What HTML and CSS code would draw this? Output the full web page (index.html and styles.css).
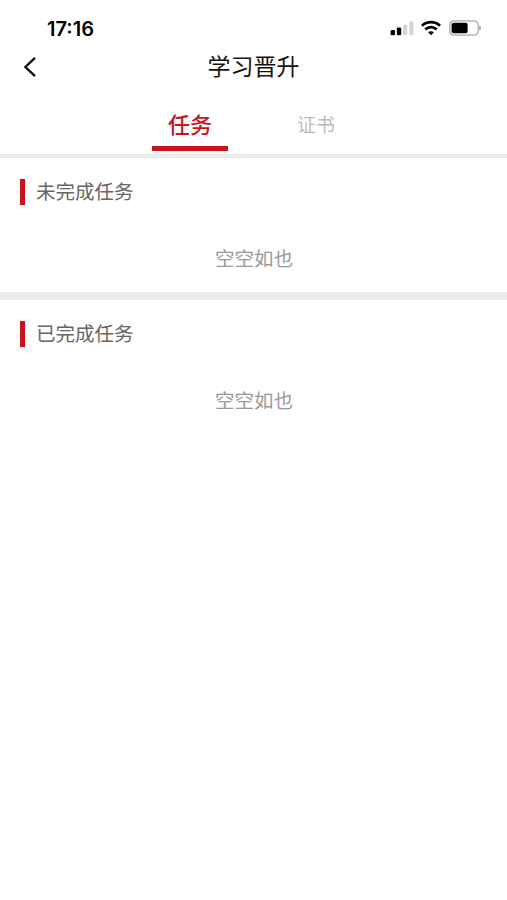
FILE: index.html
```html
<!DOCTYPE html>
<html lang="zh-CN">
<head>
    <meta charset="UTF-8">
    <meta name="viewport" content="width=device-width, initial-scale=1.0">
    <title>学习晋升</title>
    <link rel="stylesheet" href="styles.css">
</head>
<body>

<div class="statusBar">
    <span class="time">17:16</span>
    <div class="statusIcons">
        <svg class="signal" width="24" height="16" viewBox="0 0 24 16">
            <rect x="0.6" y="10" width="4.4" height="5.2" rx="1.2" fill="#000"/>
            <rect x="6.8" y="7.6" width="4.4" height="7.6" rx="1.2" fill="#000"/>
            <rect x="13.2" y="4.6" width="4" height="10.6" rx="1.2" fill="#d4d4d4"/>
            <rect x="19.4" y="1.4" width="4" height="13.8" rx="1.2" fill="#d4d4d4"/>
        </svg>
        <svg class="wifi" width="20" height="16" viewBox="0 0 20 16" fill="none" stroke="#000" stroke-width="2.8">
            <path d="M1 5.8 C6 0.9 14 0.9 19 5.8"/>
            <path d="M4.3 9.4 C7.6 6.4 12.4 6.4 15.7 9.4"/>
            <path d="M10 15.2 L7.1 12.3 C8.7 10.8 11.3 10.8 12.9 12.3 Z" fill="#000" stroke="none"/>
        </svg>
        <svg class="battery" width="33" height="16" viewBox="0 0 33 16">
            <rect x="0.8" y="0.8" width="28.4" height="14.4" rx="4.2" fill="none" stroke="#a9a9a9" stroke-width="1.3"/>
            <rect x="2.6" y="2.8" width="16" height="10.4" rx="2" fill="#000"/>
            <path d="M30.2 5.4 C32.6 6.2 32.6 9.8 30.2 10.6 Z" fill="#a9a9a9"/>
        </svg>
    </div>
</div>

<div class="navBar">
    <svg class="backIcon" width="14" height="22" viewBox="0 0 14 22" fill="none" stroke="#111" stroke-width="2.4">
        <path d="M12 1.8 L2.4 11 L12 20.2"/>
    </svg>
    <h1 class="navTitle">学习晋升</h1>
</div>

<div class="tabs">
    <div class="tab active">任务</div>
    <div class="tab">证书</div>
</div>

<div class="section">
    <h2 class="sectionTitle">未完成任务</h2>
    <p class="empty">空空如也</p>
</div>

<div class="section">
    <h2 class="sectionTitle">已完成任务</h2>
    <p class="empty">空空如也</p>
</div>

</body>
</html>
```
FILE: styles.css
```css
body {
    margin: 0;
    background: #fff;
    font-family: "Noto Sans CJK SC", sans-serif;
}

.statusBar {
    display: flex;
    justify-content: space-between;
    align-items: center;
    box-sizing: border-box;
    height: 46px;
    padding: 11px 25px 0 47px;
}

.time {
    font-family: Inter, sans-serif;
    font-size: 20px;
    font-weight: 600;
    color: #000;
}

.statusIcons {
    display: flex;
    align-items: center;
    padding-bottom: 1px;
}

.wifi {
    margin-left: 7px;
}

.battery {
    margin-left: 8px;
}

.navBar {
    display: grid;
    grid-template-columns: 60px 1fr 60px;
    align-items: center;
    height: 42px;
}

.backIcon {
    margin-left: 23px;
}

.navTitle {
    margin: 0;
    font-size: 23px;
    font-weight: 400;
    line-height: 38px;
    padding-bottom: 4px;
    text-align: center;
    color: #111;
}

.tabs {
    display: flex;
    justify-content: center;
    height: 66px;
    padding-right: 1px;
    border-bottom: 4px solid #ebebeb;
}

.tab {
    display: flex;
    flex-direction: column;
    align-items: center;
    width: 126px;
    font-size: 19px;
    line-height: 71px;
    color: #bbb;
}

.tab.active {
    font-size: 22px;
    font-weight: 500;
    color: #c7141e;
}

.tab.active::after {
    content: "";
    width: 76px;
    height: 5px;
    margin-top: -13px;
    background: #c7141e;
}

.section {
    box-sizing: border-box;
    height: 142px;
    padding-top: 21px;
    border-bottom: 8px solid #ebebeb;
}

.section:last-child {
    border-bottom: none;
}

.sectionTitle {
    display: flex;
    align-items: flex-start;
    margin: 0 0 0 20px;
    font-size: 19.5px;
    font-weight: 400;
    line-height: 24px;
    color: #666;
}

.sectionTitle::before {
    content: "";
    width: 5px;
    height: 26px;
    margin-right: 11px;
    background: #c7141e;
}

.empty {
    margin: 39px 0 0 1px;
    font-size: 19.5px;
    line-height: 28px;
    text-align: center;
    color: #999;
}
```
